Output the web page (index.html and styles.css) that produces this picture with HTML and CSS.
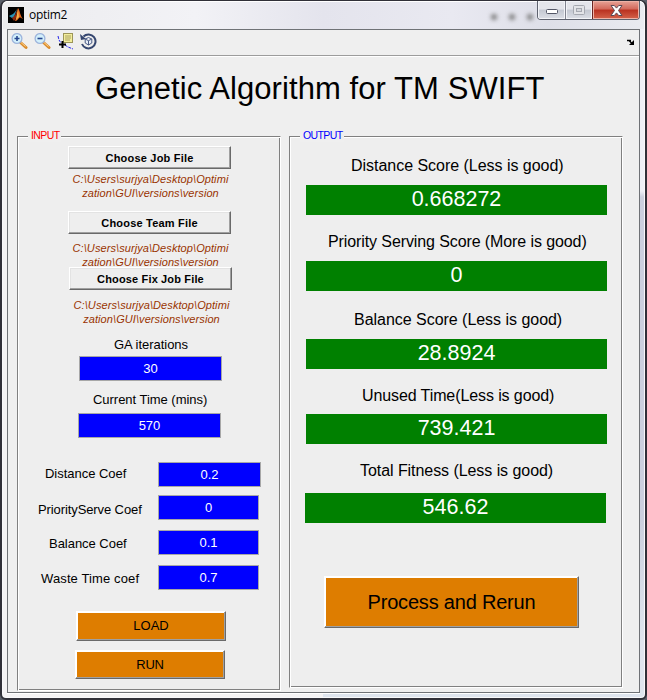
FILE: index.html
```html
<!DOCTYPE html>
<html lang="en">
<head>
<meta charset="utf-8">
<title>optim2</title>
<link rel="stylesheet" href="styles.css">
</head>
<body>
<div class="window">
  <header class="titlebar">
    <svg class="app-icon" width="16" height="16" viewBox="0 0 16 16"><rect width="16" height="16" fill="#000"/><path d="M1 9l4-2 2-2 2-3-3 8-2 1z" fill="#2a93b5"/><path d="M4 11l3-3 3-7-2 10-2 3z" fill="#8c2a12"/><path d="M10 1c2 2 2 8 5 11-2-1-3-2-4-1s-2 3-4 3c2-4 2-9 3-13z" fill="#e4651c"/><path d="M10 2l1 8-3 3z" fill="#f6b248"/></svg>
    <span class="caption">optim2</span>
    <span class="ghosts"><i></i><i></i><i></i></span>
    <div class="controls">
      <span class="ctl min"><svg width="12" height="6"><rect x=".5" y=".5" width="11" height="4" rx="1" fill="#fff" stroke="#535666"/></svg></span>
      <span class="ctl max"><svg width="12" height="10"><rect x=".5" y=".5" width="11" height="9" rx="1" fill="#e3e4e8" stroke="#a5a8b0"/><rect x="3.5" y="3.5" width="5" height="3" fill="#d5d7dc" stroke="#a5a8b0"/></svg></span>
      <span class="ctl close"><svg width="13" height="11" viewBox="0 0 13 11"><path d="M1 .5h3.3l2.2 2.6L8.700.5H12L8.500 5.500 12 10.500H8.700L6.500 7.900l-2.200 2.600H1l3.500-5z" fill="#fff" stroke="#5c4a55"/></svg></span>
    </div>
  </header>
  <main class="client">
    <nav class="toolbar">
      <svg width="17" height="17" viewBox="0 0 17 17"><path d="M9.500 9.500l5.500 5" stroke="#d98b2b" stroke-width="3" stroke-linecap="round"/><path d="M10 9.500l4.500 4" stroke="#ffd28a"/><circle cx="6" cy="5.500" r="4.900" fill="#d3f0fb" stroke="#9db4dc" stroke-width="1.300"/><path d="M3.500 5.500h5M6 3v5" stroke="#26478f" stroke-width="1.600"/></svg>
      <svg width="17" height="17" viewBox="0 0 17 17"><path d="M9.500 9.500l5.500 5" stroke="#d98b2b" stroke-width="3" stroke-linecap="round"/><path d="M10 9.500l4.500 4" stroke="#ffd28a"/><circle cx="6" cy="5.500" r="4.900" fill="#d3f0fb" stroke="#9db4dc" stroke-width="1.300"/><path d="M3.500 5.500h5" stroke="#26478f" stroke-width="1.600"/></svg>
      <svg width="17" height="17" viewBox="0 0 17 17"><path d="M1 3l1 4 2 3M8 12l3 2 5 2" fill="none" stroke="#2222e8" stroke-dasharray="3 1"/><rect x="6.500" y=".5" width="9" height="9" fill="#f3ee9c" stroke="#9c9558"/><path d="M8 3h6M8 5h6M8 7h5" stroke="#a9a163"/><path d="M2 11.500h7M5.500 8v7" stroke="#000" stroke-width="2"/></svg>
      <svg width="17" height="17" viewBox="0 0 17 17"><path d="M3.500 3.500A7 7 0 1 1 2 11" fill="none" stroke="#35466f" stroke-width="2"/><path d="M0 1l1 6 5-1z" fill="#35466f"/><path d="M8.500 4.500l3.300 1.500v4l-3.300 2-3.300-2V6zM5.200 6l3.300 1.700L11.800 6M8.500 7.700V12" fill="#e7edf7" stroke="#4a5b85"/></svg>
      <svg class="dock" width="8" height="7" viewBox="0 0 8 7"><path d="M0 1.500h2l3 3M2 1.500h2" fill="none" stroke="#000" stroke-width="1.400"/><path d="M7 1v5H2z" fill="#000"/></svg>
    </nav>
    <h1>Genetic Algorithm for TM SWIFT</h1>
    <div class="panels">
      <section class="panel input">
        <h2>INPUT</h2>
        <button class="file job">Choose Job File</button>
        <p class="path p1">C:\Users\surjya\Desktop\Optimi<br>zation\GUI\versions\version</p>
        <button class="file team">Choose Team File</button>
        <p class="path p2">C:\Users\surjya\Desktop\Optimi<br>zation\GUI\versions\version</p>
        <button class="file fix">Choose Fix Job File</button>
        <p class="path p3">C:\Users\surjya\Desktop\Optimi<br>zation\GUI\versions\version</p>
        <label class="l-ga">GA iterations</label>
        <div class="edit e-ga">30</div>
        <label class="l-time">Current Time (mins)</label>
        <div class="edit e-time">570</div>
        <div class="row r1"><label>Distance Coef</label><div class="edit">0.2</div></div>
        <div class="row r2"><label>PriorityServe Coef</label><div class="edit">0</div></div>
        <div class="row r3"><label>Balance Coef</label><div class="edit">0.1</div></div>
        <div class="row r4"><label>Waste Time coef</label><div class="edit">0.7</div></div>
        <button class="action load">LOAD</button>
        <button class="action run">RUN</button>
      </section>
      <section class="panel output">
        <h2>OUTPUT</h2>
        <div class="score s1"><h3>Distance Score (Less is good)</h3><output>0.668272</output></div>
        <div class="score s2"><h3>Priority Serving Score (More is good)</h3><output>0</output></div>
        <div class="score s3"><h3>Balance Score (Less is good)</h3><output>28.8924</output></div>
        <div class="score s4"><h3>Unused Time(Less is good)</h3><output>739.421</output></div>
        <div class="score s5"><h3>Total Fitness (Less is good)</h3><output>546.62</output></div>
        <button class="action process">Process and Rerun</button>
      </section>
    </div>
  </main>
</div>
</body>
</html>
```
FILE: styles.css
```css
* { box-sizing: border-box; }
body { margin: 0; background: #5b606a; font-family: "Liberation Sans", Arial, sans-serif; color: #000; }
h1, h2, h3, p { margin: 0; font-weight: normal; white-space: nowrap; }
label { display: block; white-space: nowrap; }
button { display: block; padding: 0; font-family: inherit; color: #000; border-radius: 0; }

.window {
  width: 647px; height: 700px; padding: 0 5px 0 5px;
  border: 2px solid #303038; border-top-width: 1px; border-radius: 7px 7px 6px 6px;
  background: linear-gradient(90deg, #f4f3f4 0 50%, transparent 50%), linear-gradient(#eef0f6 0 190px, #cbd0de 196px 520px, #dfe5ee 640px);
  box-shadow: inset 0 0 0 1px #f8f8fa;
}
.titlebar {
  height: 28px; margin: 0 -4px; padding-left: 5px; display: flex; align-items: flex-start;
  border-radius: 5px 5px 0 0; border-top: 1px solid #fff;
  background: linear-gradient(90deg, #ececee, #f2f2f6 30%, #e4e4ed 50%, #e9e9f1 70%, #dedfe8 85%, #e9ebf0);
}
.app-icon { margin-top: 5px; }
.caption { margin: 4px 0 0 5px; font: 12px/17px "Open Sans", sans-serif; letter-spacing: -.3px; }
.ghosts { display: flex; gap: 12px; margin: 12px 4px 0 auto; }
.ghosts i { width: 6px; height: 6px; border-radius: 3px; background: #777; filter: blur(2px); }
.controls { display: flex; height: 19px; margin: -1px 4px 0 0; border: 1px solid #5e626e; border-top: 0; border-radius: 0 0 4px 4px; overflow: hidden; }
.ctl { display: flex; justify-content: center; align-items: center; box-shadow: inset 0 0 0 1px #f3f4f8; background: linear-gradient(#e4e5eb 45%, #c4c8d2 50%, #dcdfe6); }
.min { width: 28px; border-right: 1px solid #80838f; padding-top: 4px; }
.max { width: 26px; }
.close { width: 47px; border-left: 1px solid #6b2522; background: linear-gradient(#e7a397, #d3685a 45%, #b93120 50%, #d4634b); box-shadow: inset 0 0 0 1px #eeb2a6; }

.client { width: 633px; height: 664px; border: 1px solid #6f7276; background: #efefef; box-shadow: 0 1px 0 #fff; }
.toolbar { height: 26px; padding: 3px 5px 0 3px; display: flex; gap: 6px; border-bottom: 1px solid #9c9c9c; box-shadow: 0 1px 0 #fff; }
.dock { margin: 6px -1px 0 auto; }
h1 { margin: 14px 0 0 87px; height: 38px; line-height: 38px; font-size: 31px; letter-spacing: .07px; }

.panels { display: flex; align-items: flex-start; gap: 8px; margin: 28px 0 0 9px; }
.panel { border: 1px solid; border-color: #808080 #fff #fff #808080; box-shadow: inset 1px 1px 0 #fff, inset -1px -1px 0 #808080; background: #eee; }
.input { width: 264px; height: 555px; }
.output { width: 334px; height: 552px; }
h2 { width: max-content; height: 12px; margin: -7px 0 0 10px; padding: 0 1px 0 3px; font-size: 10.500px; line-height: 11px; letter-spacing: -.6px; color: #f00; background: #efefef; }
.output h2 { color: #00f; }

.file { width: 163px; height: 23px; margin-left: 50px; padding-top: 1px; font-size: 11px; line-height: 19px; font-weight: bold; letter-spacing: .2px; background: #eee; border: 1px solid; border-color: #fff #696969 #696969 #fff; box-shadow: inset -1px -1px 0 #a0a0a0, inset 1px 1px 0 #e3e3e3; }
.job { margin-top: 4px; }
.team { margin-top: 11px; }
.fix { position: relative; margin-left: 51px; letter-spacing: .15px; }
.path { width: 163px; height: 28px; margin-left: 51px; font-size: 11px; line-height: 14px; letter-spacing: .08px; font-style: italic; text-align: center; color: #993300; }
.p1 { margin-top: 3px; }
.p2 { margin-top: 7px; margin-bottom: -2px; }
.p3 { margin-top: 8px; margin-left: 52px; }

.input label { height: 16px; font-size: 13px; line-height: 16px; letter-spacing: -.03px; }
.edit { width: 143px; height: 25px; border: 1px solid #a7a7a7; background: #00f; color: #fff; font-size: 13px; line-height: 23px; text-align: center; }
.l-ga { margin: 11px 0 0 96px; }
.e-ga { margin: 3px 0 0 61px; }
.l-time { margin: 11px 0 0 75px; }
.e-time { margin: 5px 0 0 60px; }
.row { display: flex; height: 25px; }
.row label { width: 140px; }
.row .edit { width: 101px; }
.r1 { margin-top: 24px; }
.r1 .edit { width: 103px; }
.r2 { margin-top: 8px; }
.r3, .r4 { margin-top: 10px; }
.r1 label { padding-left: 27px; padding-top: 4px; }
.r2 label { padding-left: 20px; padding-top: 7px; letter-spacing: -.1px; }
.r3 label { padding-left: 31px; padding-top: 6px; }
.r4 label { padding-left: 23px; padding-top: 6px; letter-spacing: .12px; }

.action { border: 1px solid; border-color: #fff #696969 #696969 #fff; box-shadow: inset -1px -1px 0 #a0a0a0, inset 1px 1px 0 #fff; background: #de7d00; font-size: 13px; }
.load { width: 150px; height: 30px; margin: 21px 0 0 58px; padding-bottom: 2px; }
.run { width: 150px; height: 29px; margin: 9px 0 0 57px; letter-spacing: -.2px; }
.process { width: 255px; height: 52px; margin: 53px 0 0 34px; font-size: 20px; letter-spacing: -.2px; }

.score { margin-left: 16px; width: 301px; }
h3 { height: 20px; line-height: 20px; font-size: 16px; letter-spacing: -.03px; }
output { display: block; height: 30px; line-height: 28px; font-size: 21.500px; text-align: center; color: #fff; background: #008000; }
.s1 { margin-top: 14px; } .s1 h3 { margin: 0 0 9px 45px; }
.s2 { margin-top: 17px; } .s2 h3 { margin: 0 0 9px 22px; letter-spacing: -.1px; }
.s3 { margin-top: 19px; } .s3 h3 { margin: 0 0 9px 48px; }
.s4 { margin-top: 17px; } .s4 h3 { margin: 0 0 8px 56px; letter-spacing: -.1px; }
.s5 { margin: 17px 0 0 15px; } .s5 h3 { margin: 0 0 12px 55px; letter-spacing: -.06px; }
```
